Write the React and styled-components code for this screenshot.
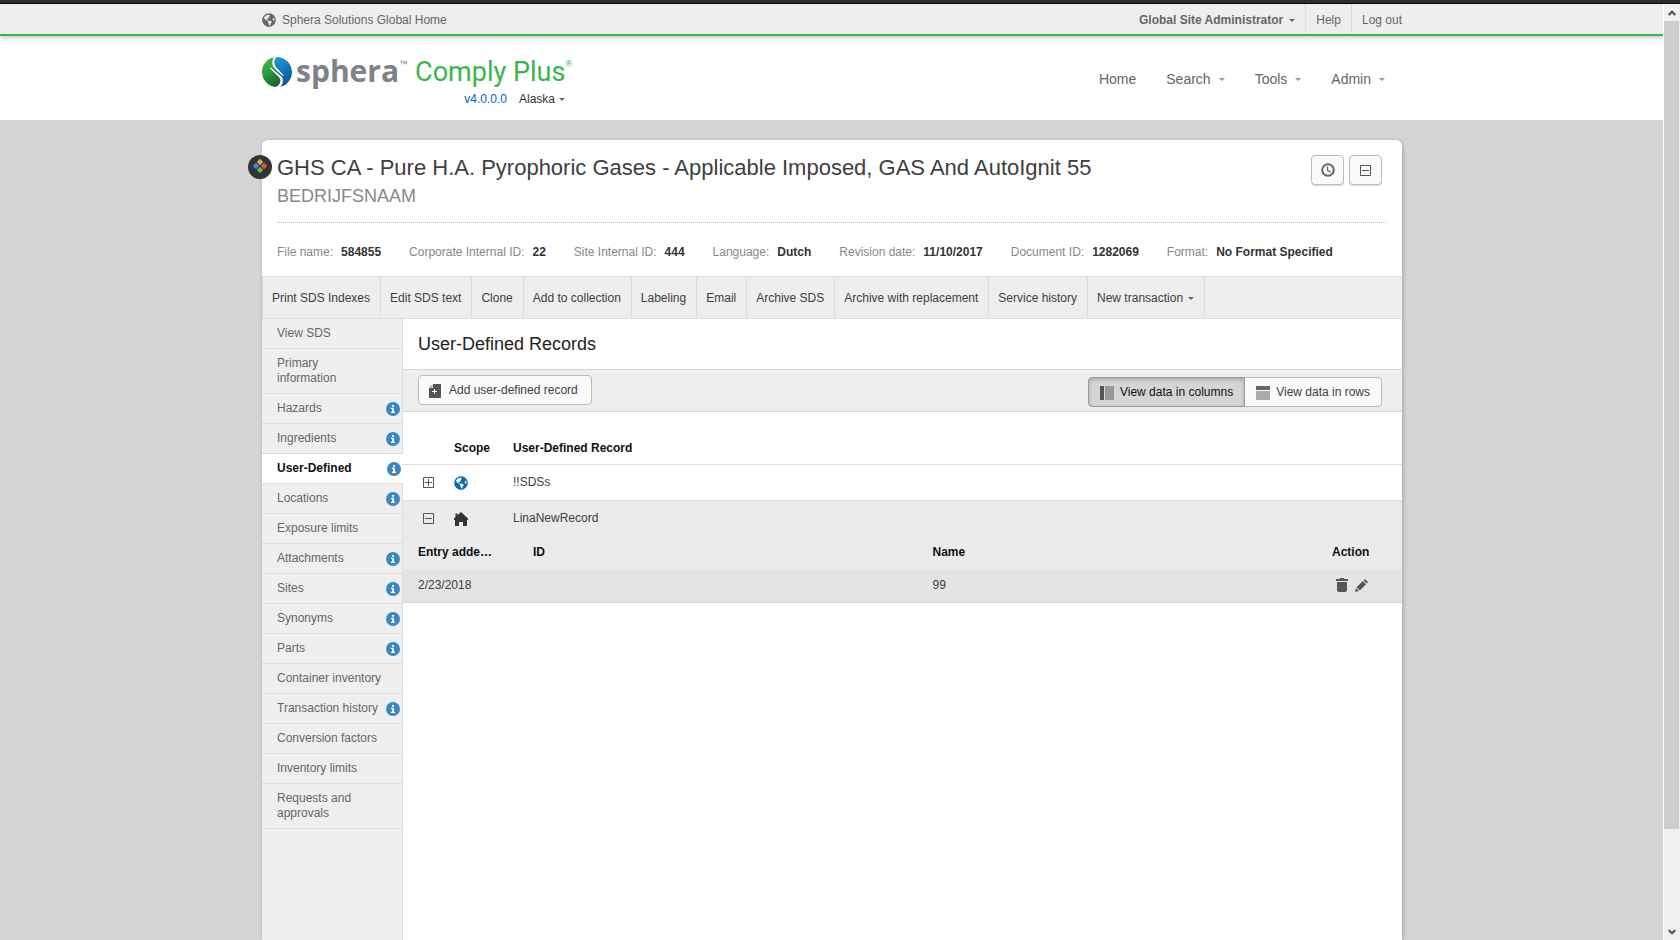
import React, { useState } from "react";
import styled, { createGlobalStyle, css } from "styled-components";
import { FaGlobeAmericas } from "react-icons/fa";

const GlobalStyle = createGlobalStyle`
  * {
    box-sizing: border-box;
  }
  body {
    margin: 0;
    background: #d5d5d5;
    color: #404040;
    font-family: "Liberation Sans", Arial, sans-serif;
    font-size: 12px;
    line-height: 15px;
  }
  a {
    color: inherit;
    text-decoration: none;
  }
  button {
    font: inherit;
    color: inherit;
    cursor: pointer;
  }
  svg {
    display: block;
    flex: none;
  }
`;

const Page = styled.div`
  min-height: 100vh;
  display: flex;
  flex-direction: column;
`;

const WindowEdge = styled.div`
  height: 4px;
  background: #2d2d30;
  border-bottom: 1px solid #0c0c0c;
`;

const Body = styled.div`
  flex: 1;
  display: flex;
`;

const Site = styled.div`
  flex: 1;
  min-width: 0;
  display: flex;
  flex-direction: column;
`;

const Container = styled.div`
  width: 100%;
  max-width: 1140px;
  margin: 0 auto;
  display: flex;
  justify-content: space-between;
`;

const TopBar = styled.div`
  position: relative;
  background: #eee;
  border-bottom: 2px solid #39b54a;
  box-shadow: 0 2px 4px rgba(0, 0, 0, 0.2);
  color: #666;
`;

const HomeLink = styled.a`
  display: flex;
  align-items: center;
  gap: 6px;
  height: 30px;
  padding-top: 2px;
`;

const TopLinks = styled.nav`
  display: flex;
`;

const TopLink = styled.a`
  display: flex;
  align-items: center;
  height: 30px;
  padding: 2px 10px 0;
  gap: 6px;
  font-weight: ${(props) => (props.$bold ? "bold" : "normal")};
  border-left: ${(props) => (props.$bold ? "none" : "1px dotted #ccc")};

  &:last-child {
    padding-right: 0;
  }
`;

const Caret = styled.span`
  width: 0;
  height: 0;
  border: 3px solid transparent;
  border-top-color: ${(props) => props.$color || "#666"};
  border-bottom: 0;
`;

const Header = styled.header`
  background: #fff;
`;

const Brand = styled.div`
  padding: 17px 0 13px;
`;

const Logo = styled.a`
  display: flex;
  align-items: center;
  height: 39px;
  padding-bottom: 1px;
`;

const BrandName = styled.span`
  margin-left: 4px;
  padding-bottom: 2px;
  font-family: "Open Sans", sans-serif;
  font-size: 30px;
  font-weight: 700;
  line-height: 34px;
  color: #808285;
`;

const ProductName = styled.span`
  margin-left: 7px;
  font-family: Roboto, sans-serif;
  font-size: 27px;
  line-height: 38px;
  color: #39b54a;
`;

const Mark = styled.sup`
  align-self: flex-start;
  margin-top: 5px;
  font-size: 9px;
  line-height: 12px;
  color: ${(props) => props.$color};
`;

const BrandMeta = styled.div`
  display: flex;
  justify-content: flex-end;
  align-items: center;
  gap: 12px;
  padding-right: 7px;
`;

const Version = styled.a`
  color: #0065bd;
`;

const SiteSwitch = styled.button`
  display: flex;
  align-items: center;
  gap: 4px;
  padding: 0;
  border: 0;
  background: none;
  color: #333;
`;

const MainNav = styled.nav`
  display: flex;
  align-items: center;
  gap: 30px;
  padding: 2px 17px 0 0;
  font-size: 14px;
  color: #666;

  a {
    display: flex;
    align-items: center;
    gap: 8px;
  }
`;

const Card = styled.main`
  position: relative;
  flex: 1;
  width: 100%;
  max-width: 1140px;
  margin: 20px auto 0;
  display: flex;
  flex-direction: column;
  background: #fff;
  border-radius: 6px 6px 0 0;
  box-shadow: 1px 1px 4px rgba(0, 0, 0, 0.25);
`;

const Badge = styled.span`
  position: absolute;
  top: 15px;
  left: -14px;
`;

const TitleRow = styled.div`
  display: flex;
  justify-content: space-between;
  margin: 0 16px 0 15px;
  padding: 15px 4px 15px 0;
  border-bottom: 1px dotted #bbb;
`;

const Title = styled.h1`
  margin: 0;
  font-size: 22px;
  font-weight: normal;
  line-height: 26px;
`;

const Company = styled.p`
  margin: 4px 0 0;
  font-size: 18px;
  line-height: 22px;
  color: #888;
`;

const IconButtons = styled.div`
  display: flex;
  gap: 5px;
  align-items: flex-start;
`;

const IconButton = styled.button`
  display: flex;
  align-items: center;
  justify-content: center;
  width: 33px;
  height: 30px;
  padding: 0;
  border: 1px solid #bbb;
  border-radius: 4px;
  background: #fafafa;
  box-shadow: 0 1px 1px rgba(0, 0, 0, 0.15);
`;

const Facts = styled.dl`
  display: flex;
  gap: 28px;
  margin: 0;
  padding: 22px 15px 16px;

  div {
    display: flex;
    gap: 8px;
  }
  dt {
    color: #888;
  }
  dd {
    margin: 0;
    font-weight: bold;
    color: #333;
  }
`;

const ActionBar = styled.nav`
  display: flex;
  background: #eee;
  border: solid #ddd;
  border-width: 1px 0 1px 1px;
`;

const ActionLink = styled.a`
  display: flex;
  align-items: center;
  gap: 5px;
  height: 41px;
  padding: 2px 10px 0 9px;
  border-right: 1px solid #ddd;
`;

const Columns = styled.div`
  flex: 1;
  display: flex;
`;

const Sidebar = styled.nav`
  width: 141px;
  background: #efefef;
  box-shadow: inset -1px 0 #ddd;
`;

const SideLink = styled.a`
  display: flex;
  align-items: center;
  justify-content: space-between;
  padding: 7px 3px 7px 15px;
  border-bottom: 1px solid #ddd;
  color: #666;

  ${(props) =>
    props.$active &&
    css`
      padding-right: 2px;
      background: #fff;
      color: #111;
      font-weight: bold;
    `}
`;

const SideText = styled.span`
  white-space: pre-line;
`;

const Content = styled.section`
  flex: 1;
  min-width: 0;
`;

const Heading = styled.h2`
  margin: 0;
  padding: 14px 15px;
  font-size: 18px;
  font-weight: normal;
  line-height: 22px;
  color: #222;
`;

const Tools = styled.div`
  display: flex;
  justify-content: space-between;
  align-items: flex-start;
  height: 43px;
  padding: 5px 20px 0 15px;
  background: #eee;
  border: solid #d5d5d5;
  border-width: 1px 0;
`;

const AddButton = styled.button`
  display: flex;
  align-items: center;
  gap: 8px;
  height: 30px;
  padding: 1px 13px 0 10px;
  border: 1px solid #bbb;
  border-radius: 4px;
  background: #fafafa;
`;

const Toggle = styled.div`
  display: flex;
  margin-top: 2px;
`;

const ToggleButton = styled.button`
  display: flex;
  align-items: center;
  gap: 6px;
  height: 30px;
  padding: 1px 11px 0;
  border: 1px solid #bbb;
  border-left-width: 0;
  border-radius: 0 4px 4px 0;
  background: #fafafa;

  &:first-child {
    border-left-width: 1px;
    border-radius: 4px 0 0 4px;
  }

  ${(props) =>
    props.$on &&
    css`
      border-color: #999;
      background: #d5d5d5;
      color: #111;
      box-shadow: inset 0 2px 4px rgba(0, 0, 0, 0.2);
    `}
`;

const Records = styled.table`
  width: 100%;
  border-collapse: collapse;
  table-layout: fixed;
  text-align: left;

  th,
  td {
    padding: 1px 0 0 14px;
  }
  th {
    color: #111;
  }
  th:first-child,
  td:first-child {
    padding-left: 15px;
  }
`;

const HeadRow = styled.tr`
  height: 52px;
  border-bottom: 1px solid #ddd;

  && > th {
    padding-top: 21px;
  }
`;

const RecordRow = styled.tr`
  height: 36px;
  background: ${(props) => (props.$open ? "#ebebeb" : "#fff")};
  border-bottom: ${(props) => (props.$open ? "none" : "1px solid #ddd")};
`;

const EntriesRow = styled.tr`
  background: #ebebeb;
  border-bottom: 1px solid #d5d5d5;

  && > td.entries {
    padding: 0;
  }
`;

const EntryHead = styled.tr`
  height: 33px;

  && > th {
    padding-top: 0;
  }
`;

const EntryRow = styled.tr`
  height: 33px;
  background: #e4e4e4;

  && > td {
    padding-top: 0;
  }
`;

const PlainButton = styled.button`
  display: block;
  margin-left: ${(props) => props.$indent || 0}px;
  padding: 0;
  border: 0;
  background: none;
`;

const Actions = styled.div`
  display: flex;
  align-items: center;
  gap: 7px;
  padding: 0 0 1px 4px;
`;

const ScrollTrack = styled.div`
  position: relative;
  width: 16px;
  display: flex;
  flex-direction: column;
  align-items: stretch;
  padding-right: 1px;
  background: #f0f0f0;
  box-shadow: -1px 0 #fff;
`;

const ScrollArrow = styled.span`
  display: flex;
  align-items: center;
  justify-content: center;
  height: 17px;
`;

const ScrollThumb = styled.div`
  flex: 808;
  background: #cdcdcd;
`;

const ScrollRest = styled.div`
  flex: 94;
`;

const InfoIcon = () => (
  <svg width="14" height="14" viewBox="0 0 14 14" aria-hidden="true">
    <circle cx="7" cy="7" r="7" fill="#3b87c4" />
    <path fill="#fff" d="M6 3h2v1.800H6zM5 5.800h3v4h1v1.200H5V9.800h1V7H5z" />
  </svg>
);

const SquareIcon = ({ plus }) => (
  <svg width="11" height="11" viewBox="0 0 11 11" fill="none" stroke="#555" aria-hidden="true">
    <path d="M.5.5h10v10H.5zM2 5.500h7" />
    {plus && <path d="M5.500 2v7" />}
  </svg>
);

const LogoMark = () => (
  <svg width="30" height="30" viewBox="0 0 30 30" aria-hidden="true">
    <defs>
      <linearGradient id="leaf" x1="0" y1="0" x2="0.4" y2="1">
        <stop offset="0" stopColor="#4fb947" />
        <stop offset="0.5" stopColor="#2f9f45" />
        <stop offset="1" stopColor="#1c6b34" />
      </linearGradient>
      <linearGradient id="water" x1="0.3" y1="0" x2="0.6" y2="1">
        <stop offset="0" stopColor="#1b9ad6" />
        <stop offset="1" stopColor="#0a4f8c" />
      </linearGradient>
    </defs>
    <path
      fill="url(#leaf)"
      d="M12 .3C5 1.600 0 7.800 0 15c0 7.800 6 14.200 13.800 15 2.700-1.300 4.400-3.400 4.600-6 .1-1.900-.8-3.300-2.300-4.800L8.200 11.400c-.5-.6.2-1.200.8-.7l9.800 8.600c.3.200.5 0 .3-.3L12.300 11C10 8.600 9.500 4.500 12 .3z"
    />
    <path
      fill="url(#water)"
      d="M14.500 0C23 0 30 6.500 30 15c0 7.300-5 13.300-11.800 14.800 2-2 3-4.400 2.700-6.900-.3-2-1.200-3.300-2.800-4.900L13 13.300c-.4-.5.100-1 .6-.600l7.600 6.300c.4.300.7 0 .4-.5-.4-.800-1-1.500-1.800-2.300L14.800 11C11.500 7.500 11.500 3 14.500 0z"
    />
  </svg>
);

const facts = [
  ["File name:", "584855"],
  ["Corporate Internal ID:", "22"],
  ["Site Internal ID:", "444"],
  ["Language:", "Dutch"],
  ["Revision date:", "11/10/2017"],
  ["Document ID:", "1282069"],
  ["Format:", "No Format Specified"],
];

const actions = [
  "Print SDS Indexes",
  "Edit SDS text",
  "Clone",
  "Add to collection",
  "Labeling",
  "Email",
  "Archive SDS",
  "Archive with replacement",
  "Service history",
  "New transaction",
];

const sections = [
  { label: "View SDS" },
  { label: "Primary\ninformation" },
  { label: "Hazards", info: true },
  { label: "Ingredients", info: true },
  { label: "User-Defined", info: true },
  { label: "Locations", info: true },
  { label: "Exposure limits" },
  { label: "Attachments", info: true },
  { label: "Sites", info: true },
  { label: "Synonyms", info: true },
  { label: "Parts", info: true },
  { label: "Container inventory" },
  { label: "Transaction history", info: true },
  { label: "Conversion factors" },
  { label: "Inventory limits" },
  { label: "Requests and\napprovals" },
];

const App = () => {
  const [view, setView] = useState("columns");

  return (
    <Page>
      <GlobalStyle />
      <WindowEdge />
      <Body>
        <Site>
          <TopBar>
            <Container>
              <HomeLink href="#home">
                <FaGlobeAmericas size={14} color="#666" />
                Sphera Solutions Global Home
              </HomeLink>
              <TopLinks>
                <TopLink href="#account" $bold>
                  Global Site Administrator
                  <Caret />
                </TopLink>
                <TopLink href="#help">Help</TopLink>
                <TopLink href="#logout">Log out</TopLink>
              </TopLinks>
            </Container>
          </TopBar>

          <Header>
            <Container>
              <Brand>
                <Logo href="#home">
                  <LogoMark />
                  <BrandName>sphera</BrandName>
                  <Mark $color="#808285">™</Mark>
                  <ProductName>Comply Plus</ProductName>
                  <Mark $color="#39b54a">®</Mark>
                </Logo>
                <BrandMeta>
                  <Version href="#version">v4.0.0.0</Version>
                  <SiteSwitch type="button">
                    Alaska
                    <Caret />
                  </SiteSwitch>
                </BrandMeta>
              </Brand>
              <MainNav>
                <a href="#home">Home</a>
                {["Search", "Tools", "Admin"].map((item) => (
                  <a href={`#${item}`} key={item}>
                    {item}
                    <Caret $color="#999" />
                  </a>
                ))}
              </MainNav>
            </Container>
          </Header>

          <Card>
            <Badge>
              <svg width="24" height="24" viewBox="0 0 24 24" aria-hidden="true">
                <circle cx="12" cy="12" r="12" fill="#333" />
                <path fill="#dfb04a" d="m12 3.800 3.200 3.200-3.200 3.200L8.800 7z" />
                <path fill="#3b8ee8" d="m8 7.800 3.200 3.200L8 14.200 4.800 11z" />
                <path fill="#d9584f" d="m16 7.800 3.200 3.200-3.200 3.200-3.200-3.200z" />
                <path fill="#6fae4f" d="m12 11.800 3.200 3.200-3.200 3.200L8.800 15z" />
              </svg>
            </Badge>
            <TitleRow>
              <div>
                <Title>GHS CA - Pure H.A. Pyrophoric Gases - Applicable Imposed, GAS And AutoIgnit 55</Title>
                <Company>BEDRIJFSNAAM</Company>
              </div>
              <IconButtons>
                <IconButton type="button" aria-label="History">
                  <svg width="14" height="14" viewBox="0 0 14 14" fill="none" stroke="#666" aria-hidden="true">
                    <circle cx="7" cy="7" r="5.800" strokeWidth="2" />
                    <path d="M6.500 3.500v3.800l3 2" strokeWidth="1.300" />
                  </svg>
                </IconButton>
                <IconButton type="button" aria-label="Collapse">
                  <SquareIcon />
                </IconButton>
              </IconButtons>
            </TitleRow>
            <Facts>
              {facts.map(([label, value]) => (
                <div key={label}>
                  <dt>{label}</dt>
                  <dd>{value}</dd>
                </div>
              ))}
            </Facts>
            <ActionBar>
              {actions.map((action) => (
                <ActionLink href="#action" key={action}>
                  {action}
                  {action === "New transaction" && <Caret />}
                </ActionLink>
              ))}
            </ActionBar>

            <Columns>
              <Sidebar>
                {sections.map((section) => (
                  <SideLink href="#section" key={section.label} $active={section.label === "User-Defined"}>
                    <SideText>{section.label}</SideText>
                    {section.info && <InfoIcon />}
                  </SideLink>
                ))}
              </Sidebar>

              <Content>
                <Heading>User-Defined Records</Heading>
                <Tools>
                  <AddButton type="button">
                    <svg width="12" height="14" viewBox="0 0 12 14" aria-hidden="true">
                      <path fill="#aaa" d="M0 3.500 3.500 0v3.500z" />
                      <path fill="#555" d="M4 0h8v14H0V4h4z" />
                      <path stroke="#fff" d="M5.500 5v5M3 7.500h5" />
                    </svg>
                    Add user-defined record
                  </AddButton>
                  <Toggle>
                    <ToggleButton type="button" $on={view === "columns"} onClick={() => setView("columns")}>
                      <svg width="14" height="14" viewBox="0 0 14 14" aria-hidden="true">
                        <path fill="#555" d="M0 0h4v14H0z" />
                        <path fill="#999" d="M5 0h9v14H5z" />
                      </svg>
                      View data in columns
                    </ToggleButton>
                    <ToggleButton type="button" $on={view === "rows"} onClick={() => setView("rows")}>
                      <svg width="14" height="14" viewBox="0 0 14 14" aria-hidden="true">
                        <path fill="#666" d="M0 0h14v4H0z" />
                        <path fill="#aaa" d="M0 5h14v9H0z" />
                      </svg>
                      View data in rows
                    </ToggleButton>
                  </Toggle>
                </Tools>

                <Records>
                  <colgroup>
                    <col style={{ width: 37 }} />
                    <col style={{ width: 59 }} />
                    <col />
                  </colgroup>
                  <thead>
                    <HeadRow>
                      <th aria-label="Expand" />
                      <th>Scope</th>
                      <th>User-Defined Record</th>
                    </HeadRow>
                  </thead>
                  <tbody>
                    <RecordRow>
                      <td>
                        <PlainButton type="button" aria-label="Expand" $indent={5}>
                          <SquareIcon plus />
                        </PlainButton>
                      </td>
                      <td>
                        <FaGlobeAmericas size={14} color="#0a6ab8" />
                      </td>
                      <td>!!SDSs</td>
                    </RecordRow>
                    <RecordRow $open>
                      <td>
                        <PlainButton type="button" aria-label="Collapse" $indent={5}>
                          <SquareIcon />
                        </PlainButton>
                      </td>
                      <td>
                        <svg width="14" height="14" viewBox="0 0 14 14" aria-hidden="true">
                          <path fill="#333" d="M7 0 3.500 3.200V1.500H1.500v3.500L0 6.500V8h1v6h4V10h4v4h4V8h1V6.500z" />
                        </svg>
                      </td>
                      <td>LinaNewRecord</td>
                    </RecordRow>
                    <EntriesRow>
                      <td className="entries" colSpan={3}>
                        <Records>
                          <colgroup>
                            <col style={{ width: 116 }} />
                            <col />
                            <col />
                            <col style={{ width: 84 }} />
                          </colgroup>
                          <thead>
                            <EntryHead>
                              <th>Entry adde…</th>
                              <th>ID</th>
                              <th>Name</th>
                              <th>Action</th>
                            </EntryHead>
                          </thead>
                          <tbody>
                            <EntryRow>
                              <td>2/23/2018</td>
                              <td />
                              <td>99</td>
                              <td>
                                <Actions>
                                  <PlainButton type="button" aria-label="Delete">
                                    <svg width="12" height="14" viewBox="0 0 12 14" fill="#555" aria-hidden="true">
                                      <path d="M4 0h4v1h4v2H0V1h4zM1 4h10v8.500L9.500 14h-7L1 12.500z" />
                                    </svg>
                                  </PlainButton>
                                  <PlainButton type="button" aria-label="Edit">
                                    <svg width="13" height="13" viewBox="0 0 13 13" fill="#555" aria-hidden="true">
                                      <path d="M7.800 2 11 5.200 4.800 11.400 1.600 8.200zM8.600 1.300 9.900 0l3.100 3.100-1.300 1.300zM1 9l3 3-4 1z" />
                                    </svg>
                                  </PlainButton>
                                </Actions>
                              </td>
                            </EntryRow>
                          </tbody>
                        </Records>
                      </td>
                    </EntriesRow>
                  </tbody>
                </Records>
              </Content>
            </Columns>
          </Card>
        </Site>

        <ScrollTrack aria-hidden="true">
          <ScrollArrow>
            <svg width="8" height="6" viewBox="0 0 8 6" fill="none" stroke="#505050" strokeWidth="2">
              <path d="M.7 5 4 1.700 7.300 5" />
            </svg>
          </ScrollArrow>
          <ScrollThumb />
          <ScrollRest />
          <ScrollArrow>
            <svg width="8" height="6" viewBox="0 0 8 6" fill="none" stroke="#505050" strokeWidth="2">
              <path d="M.7 1 4 4.300 7.300 1" />
            </svg>
          </ScrollArrow>
        </ScrollTrack>
      </Body>
    </Page>
  );
};

export default App;
